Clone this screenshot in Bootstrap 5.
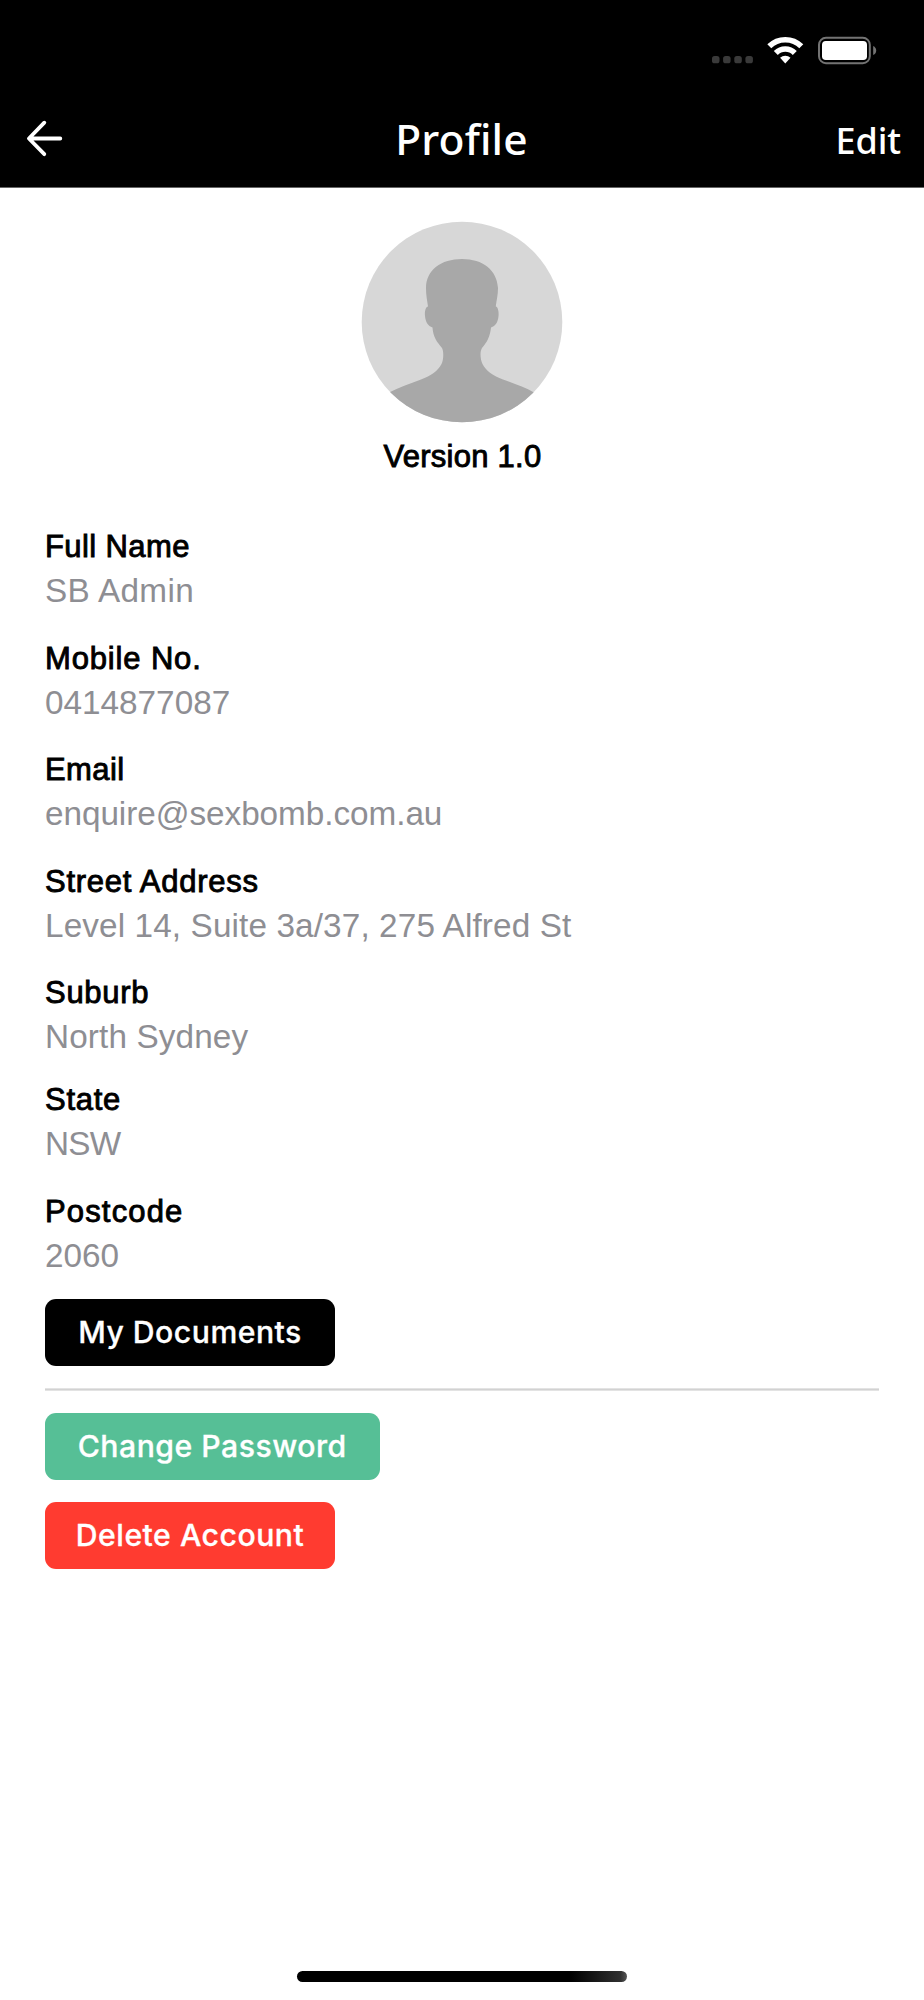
<!DOCTYPE html>
<html lang="en">
<head>
<meta charset="utf-8">
<meta name="viewport" content="width=device-width, initial-scale=1">
<title>Profile</title>
<link href="https://cdn.jsdelivr.net/npm/bootstrap@5.3.0/dist/css/bootstrap.min.css" rel="stylesheet">
<style>
body { font-family: "Liberation Sans", Arial, sans-serif; color: #000; background: #fff; }
.screen { height: 2000px; overflow: hidden; }
.top-area { height: 188px; background: #000; border-bottom: 1px solid #666; }
.status { height: 100px; padding: 36px 47px 0 0; }
.titlebar { height: 87px; padding: 0 23px 0 26px; font-family: "Noto Sans", "Open Sans", sans-serif; font-weight: 500; }
.side { flex: 1 1 0; }
.back { margin-top: 20px; }
.title { font-size: 42.5px; line-height: 78px; letter-spacing: .15px; margin: 0 4px 0 0; }
.edit { font-size: 36px; line-height: 82px; letter-spacing: -.1px; }
.avatar { width: 202px; height: 202px; margin-top: 32.5px; }
.strong-text { font-size: 31px; line-height: 40px; -webkit-text-stroke: .9px #000; letter-spacing: .4px; }
.version { margin-top: 14.5px; padding-left: 1px; letter-spacing: .25px; }
.fields { padding: 0 45px; margin-top: 50px; }
.field { margin-bottom: 23.5px; }
.field.tight { margin-bottom: 19.2px; }
.value { font-size: 33.3px; line-height: 48px; color: #8e8e93; }
.ls-mobile { letter-spacing: .85px; }
.ls-street { letter-spacing: .75px; }
.ls-suburb { letter-spacing: .7px; }
.ls-post { letter-spacing: 1.15px; }
.ls-v1 { letter-spacing: .35px; }
.ls-v2 { letter-spacing: .12px; }
.ls-v3 { letter-spacing: -.7px; }
.ls-v4 { letter-spacing: -.05px; }
.action { width: 290px; height: 67px; border-radius: 11px; border: 0; padding: 0; font: 500 30.2px/67px Inter, sans-serif; letter-spacing: .5px; -webkit-text-stroke: .3px #fff; color: #fff; }
.action.wide { width: 334.5px; }
.action.last { margin-top: 22px; }
.black { background: #000; }
.green { background: #56bf96; }
.red { background: #ff3b30; }
.rule { height: 3px; background: linear-gradient(#e3e3e3 0 1px, #d2d2d2 1px 2px, #e3e3e3 2px); margin: 22px 0; }
.home { width: 330px; height: 11px; border-radius: 6px; background: linear-gradient(90deg, #000 83%, #303030 98%, #555); margin-bottom: 18px; }
</style>
</head>
<body>
<div class="screen d-flex flex-column">
  <header class="top-area text-white flex-shrink-0">
    <div class="status d-flex justify-content-end">
      <svg width="165" height="30" viewBox="0 0 165 30" aria-hidden="true">
        <g fill="#3a3a3a">
          <rect x="0" y="20" width="7.5" height="7.3" rx="2.6"/><rect x="11.1" y="20" width="7.5" height="7.3" rx="2.6"/><rect x="22.3" y="20" width="7.5" height="7.3" rx="2.6"/><rect x="33.4" y="20" width="7.5" height="7.3" rx="2.6"/>
        </g>
        <g fill="none" stroke="#fff" stroke-width="5.6">
          <path d="M57.3 10.3a22.7 22.7 0 0 1 32 0"/>
          <path d="M63.8 17a13.4 13.4 0 0 1 19 0"/>
        </g>
        <path d="M68.1 21.8a7.4 7.4 0 0 1 10.4 0l-5.2 5.7z" fill="#fff"/>
        <rect x="107" y="1.8" width="50.8" height="25.4" rx="7" fill="none" stroke="#737373" stroke-width="2"/>
        <rect x="110" y="5" width="45" height="19" rx="3.8" fill="#fff"/>
        <path d="M161.200 10q3 1.500 3 4.500t-3 4.500z" fill="#737373"/>
      </svg>
    </div>
    <nav class="titlebar d-flex align-items-start">
      <div class="side">
        <svg class="back d-block" width="37" height="37" viewBox="0 0 37 37" fill="none" stroke="#fff" stroke-width="3.8" stroke-linecap="round" stroke-linejoin="round" aria-label="Back"><path d="M34.3 18.5H3.5M18.3 2.7L2.9 18.5L18.3 34.2"/></svg>
      </div>
      <div class="title">Profile</div>
      <div class="side text-end edit">Edit</div>
    </nav>
  </header>
  <main class="flex-grow-1">
    <div class="d-flex flex-column align-items-center">
      <svg class="avatar" viewBox="0 0 202 202" role="img" aria-label="Avatar">
        <defs><clipPath id="disc"><circle cx="101" cy="101" r="100.3"/></clipPath></defs>
        <g clip-path="url(#disc)">
          <rect width="202" height="202" fill="#d7d7d7"/>
          <path fill="#a8a8a8" d="M101 38C80 38 65 49 65 67C65 74 66 79 67 85.500C64.500 86 63.500 91 64 95C64.500 101 67 105 71.500 106.500C72 116 76 121 81 127C83 131 82.500 139 80.500 143C77 150 70 154.500 60 158.500C48 163 38 166.500 28 171.500L10 202H192L173 171.500C164 166.500 154 163 142 158.500C132 154.500 125 150 121.500 143C119.500 139 118.500 131 121 127C126 121 129 116 130 106.500C134.500 105 137 101 137.500 95C138 91 137 86 134.800 85.500C135.500 79 137 74 137 67C136 49 122 38 101 38Z"/>
        </g>
      </svg>
      <div class="strong-text version">Version 1.0</div>
    </div>
    <div class="fields">
      <div class="field"><div class="strong-text">Full Name</div><div class="value ls-v1">SB Admin</div></div>
      <div class="field"><div class="strong-text ls-mobile">Mobile No.</div><div class="value">0414877087</div></div>
      <div class="field"><div class="strong-text">Email</div><div class="value ls-v4">enquire@sexbomb.com.au</div></div>
      <div class="field"><div class="strong-text ls-street">Street Address</div><div class="value ls-v2">Level 14, Suite 3a/37, 275 Alfred St</div></div>
      <div class="field tight"><div class="strong-text ls-suburb">Suburb</div><div class="value ls-v2">North Sydney</div></div>
      <div class="field"><div class="strong-text ls-suburb">State</div><div class="value ls-v3">NSW</div></div>
      <div class="field tight"><div class="strong-text ls-post">Postcode</div><div class="value">2060</div></div>
      <button class="btn action black d-block" type="button">My Documents</button>
      <div class="rule"></div>
      <button class="btn action wide green d-block" type="button">Change Password</button>
      <button class="btn action last red d-block" type="button">Delete Account</button>
    </div>
  </main>
  <div class="home align-self-center flex-shrink-0"></div>
</div>
<script src="https://cdn.jsdelivr.net/npm/bootstrap@5.3.0/dist/js/bootstrap.bundle.min.js"></script>
</body>
</html>
